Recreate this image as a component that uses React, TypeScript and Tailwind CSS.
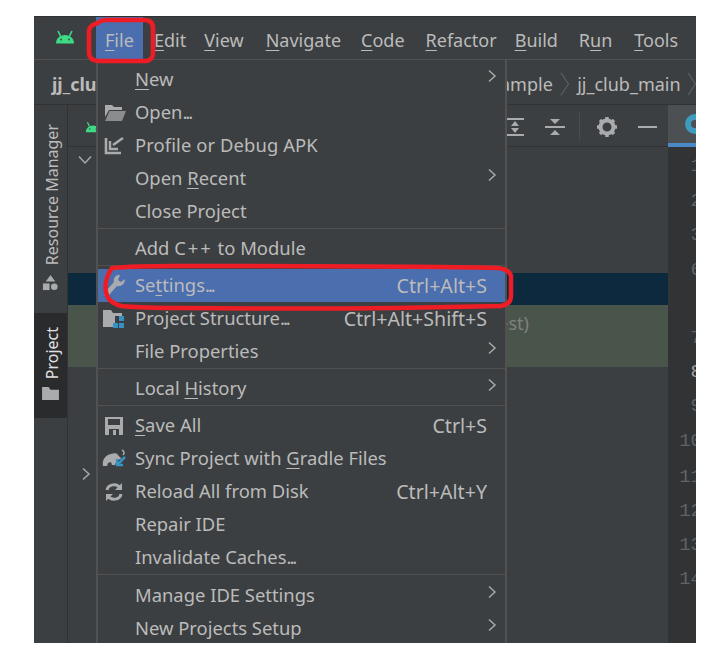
import type { ReactNode } from "react";

const font = { fontFamily: '"Noto Sans", sans-serif' };

function U({ children }: { children: ReactNode }) {
  return <span className="underline decoration-1 underline-offset-[3px]">{children}</span>;
}

function Dots() {
  return <span className="tracking-[-2px]">...</span>;
}

function AndroidIcon({ className }: { className: string }) {
  return (
    <svg viewBox="0 0 20 14" className={className}>
      <path d="M1 13.500c0-5 4-8.500 9-8.500s9 3.500 9 8.500z" fill="#3ddc84" />
      <path d="M5.500 6 3 1M14.500 6 17 1" stroke="#3ddc84" strokeWidth="1.600" />
      <circle cx="6" cy="9.500" r="0.900" fill="#3c3f41" />
      <circle cx="14" cy="9.500" r="0.900" fill="#3c3f41" />
    </svg>
  );
}

function Chevron({ className }: { className: string }) {
  return (
    <svg viewBox="0 0 10 14" className={className} fill="none" stroke="#a8a8a8" strokeWidth="1.500">
      <path d="M2 1.500 8 7l-6 5.500" />
    </svg>
  );
}

function Crumb({ className }: { className: string }) {
  return (
    <svg viewBox="0 0 10 26" className={className} fill="none" stroke="#5e6062" strokeWidth="1.200">
      <path d="M1 1 9 13 1 25" />
    </svg>
  );
}

const g = "#a9abad";

const icons: Record<string, ReactNode> = {
  open: (
    <svg viewBox="0 0 22 18" className="w-[22px] h-[18px]">
      <path d="M1 1h7l2 2h8v3H5L1 13z" fill={g} />
      <path d="M5.500 7H22l-4 10H1z" fill="#8a8c8e" />
    </svg>
  ),
  apk: (
    <svg viewBox="0 0 20 20" className="w-[20px] h-[20px]" fill="none" stroke={g} strokeWidth="2.600">
      <path d="M2 2v15h15" />
      <path d="M19 2 9 9" />
      <path d="M6 5v8h8" strokeWidth="2.400" />
    </svg>
  ),
  wrench: (
    <svg viewBox="0 0 22 24" className="w-[22px] h-[24px]">
      <path d="M14 1c-3 1-5 4-4 7L1 18c-1 2-1 3 0 4s3 1 4-1l8-9c4 1 8-2 8-7l-4 3-3-2 2-5z" fill={g} />
    </svg>
  ),
  structure: (
    <svg viewBox="0 0 24 20" className="w-[24px] h-[20px] -ml-[2px]">
      <path d="M1 1h8l2 3h9v3h-7v11H1z" fill={g} />
      <rect x="17" y="7" width="5" height="5" fill="#3592c4" />
      <rect x="11" y="14" width="5" height="5" fill="#3592c4" />
      <rect x="17" y="14" width="5" height="5" fill="#3592c4" />
    </svg>
  ),
  save: (
    <svg viewBox="0 0 20 20" className="w-[20px] h-[20px]">
      <path d="M1 1h18v18H1z" fill={g} />
      <rect x="4" y="3" width="12" height="6" fill="#3c3f41" />
      <rect x="5" y="13" width="10" height="6" fill="#3c3f41" />
      <rect x="9" y="14" width="3" height="5" fill={g} />
    </svg>
  ),
  gradle: (
    <svg viewBox="0 0 24 20" className="w-[24px] h-[20px] -ml-[2px]">
      <path d="M1 17c-1-6 2-11 8-12 3-1 6-1 7 1s3 2 3 4l-4 1-2 5h-3l-1-3-3 1-1 3z" fill={g} />
      <path d="M20 1c2 1 3 3 1 5" stroke={g} strokeWidth="1.500" fill="none" />
      <path d="M23 8 15 16M15 10v6h6" stroke="#3592c4" strokeWidth="2.500" fill="none" />
    </svg>
  ),
  reload: (
    <svg viewBox="0 0 20 20" className="w-[20px] h-[20px]" fill="none" stroke={g} strokeWidth="3">
      <path d="M3 8c1-6 10-7 13-2" />
      <path d="M17 12c-1 6-10 7-13 2" />
      <path d="M18 1v7h-7z" fill={g} stroke="none" />
      <path d="M2 19v-7h7z" fill={g} stroke="none" />
    </svg>
  ),
};

function Item({
  children,
  icon,
  shortcut,
  more,
  active,
  cls,
}: {
  children: ReactNode;
  icon?: string;
  shortcut?: string;
  more?: boolean;
  active?: boolean;
  cls?: string;
}) {
  return (
    <div className={`flex items-center h-[33px] ${active ? "bg-[#4b6eaf]" : ""} ${cls ?? ""}`}>
      <div className="w-[37px] pl-[6px] flex items-center shrink-0">{icon && icons[icon]}</div>
      <span className="flex-1 whitespace-nowrap text-[18.4px]">{children}</span>
      {shortcut && <span className="pr-[18px] whitespace-nowrap text-[19.6px]">{shortcut}</span>}
      {more && <Chevron className="w-[10px] h-[14px] mr-[8px] -mt-[8px]" />}
    </div>
  );
}

function Sep({ cls }: { cls?: string }) {
  return <div className={`border-t border-[#515151] ${cls ?? "h-[4px]"}`} />;
}

export default function App() {
  const lines = [
    ["1", "h-[35px]"],
    ["2", "h-[34px]"],
    ["3", "h-[35px]"],
    ["6", "h-[68px]"],
    ["7", "h-[34px]"],
    ["8", "h-[34px]"],
    ["9", "h-[35px]"],
    ["10", "h-[36px]"],
    ["11", "h-[34px]"],
    ["12", "h-[34px]"],
    ["13", "h-[34px]"],
    ["14", "h-[34px]"],
  ];

  return (
    <div className="w-[705px] h-[661px] bg-white pt-[16px] pl-[34px] overflow-hidden" style={font}>
      <div className="relative w-[662px] h-[627px] bg-[#3c3f41] text-[#bbbbbb] text-[18px] leading-none flex flex-col overflow-hidden border-t border-[#2f3133]">
        {/* menu bar */}
        <div className="h-[43px] flex items-center border-b border-[#505254] shrink-0">
          <AndroidIcon className="w-[20px] h-[14px] ml-[21px] -mt-[2px]" />
          <div className="ml-[21px] w-[47px] h-full bg-[#4b6eaf] flex items-center pl-[9px] pt-[4px]">
            <span><U>F</U>ile</span>
          </div>
          <div className="flex items-center pt-[4px]">
            <span className="ml-[11px]"><U>E</U>dit</span>
            <span className="ml-[18px]"><U>V</U>iew</span>
            <span className="ml-[22px]"><U>N</U>avigate</span>
            <span className="ml-[20px]"><U>C</U>ode</span>
            <span className="ml-[21px]"><U>R</U>efactor</span>
            <span className="ml-[18px]"><U>B</U>uild</span>
            <span className="ml-[21px]">R<U>u</U>n</span>
            <span className="ml-[22px]"><U>T</U>ools</span>
          </div>
        </div>

        {/* breadcrumb */}
        <div className="h-[45px] flex items-center border-b border-[#323232] shrink-0 pl-[18px] pt-[3px]">
          <span className="font-bold w-[448px] shrink-0 whitespace-nowrap">jj_club</span>
          <span>ample</span>
          <Crumb className="w-[10px] h-[26px] ml-[7px]" />
          <span className="ml-[8px]">jj_club_main</span>
          <Crumb className="w-[10px] h-[26px] ml-[6px]" />
        </div>

        <div className="flex flex-1 min-h-0">
          {/* tool window stripe */}
          <div className="w-[34px] shrink-0 border-r border-[#323232] flex flex-col items-center pt-[19px]">
            <span className="[writing-mode:vertical-rl] rotate-180 text-[16px] whitespace-nowrap ml-[3px]">Resource Manager</span>
            <svg viewBox="0 0 18 18" className="w-[17px] h-[17px] mt-[9px]" fill="#a9abad">
              <path d="M9 1 14 8H4z" />
              <rect x="1" y="10" width="7" height="7" />
              <circle cx="13" cy="13.500" r="3.500" />
            </svg>
            <div className="mt-[22px] w-full h-[105px] bg-[#292b2d] flex flex-col items-center pt-[14px] text-[#e0e0e0]">
              <span className="[writing-mode:vertical-rl] rotate-180 text-[16px] ml-[3px]">Project</span>
              <svg viewBox="0 0 18 16" className="w-[17px] h-[15px] mt-[7px]" fill="#a9abad">
                <path d="M0 1h7l2 3h9v11H0z" />
              </svg>
            </div>
          </div>

          {/* project panel */}
          <div className="flex-1 min-w-0 flex flex-col">
            <div className="h-[42px] flex items-center border-b border-[#323232] shrink-0 pt-[3px]">
              <AndroidIcon className="w-[16px] h-[12px] ml-[17px]" />
              <div className="ml-auto flex items-center mr-[11px]">
                <svg viewBox="0 0 20 20" className="w-[20px] h-[20px]" fill="none" stroke="#a9abad" strokeWidth="2">
                  <path d="M1 2h18M1 18h18" />
                  <path d="M10 5v3M10 15v-3" />
                  <path d="M6 9h8l-4-5zM6 11h8l-4 5z" fill="#a9abad" stroke="none" />
                </svg>
                <svg viewBox="0 0 20 20" className="w-[20px] h-[20px] ml-[20px]" fill="#a9abad">
                  <rect x="0" y="9" width="20" height="2" />
                  <path d="M5 2h10l-5 5zM5 18h10l-5-5z" />
                </svg>
                <div className="w-px h-[28px] bg-[#4a4c4e] ml-[14px]" />
                <svg viewBox="0 0 20 20" className="w-[20px] h-[20px] ml-[17px]">
                  <circle cx="10" cy="10" r="6.500" fill="none" stroke="#a9abad" strokeWidth="4" />
                  <path d="M10 0v4M10 16v4M0 10h4M16 10h4M3 3l3 3M14 14l3 3M17 3l-3 3M6 14l-3 3" stroke="#a9abad" strokeWidth="3.500" />
                </svg>
                <div className="w-[19px] h-[2px] bg-[#a9abad] ml-[21px]" />
              </div>
            </div>
            <div className="flex-1 min-h-0">
              <div className="h-[126px] pl-[10px] pt-[8px]">
                <svg viewBox="0 0 14 10" className="w-[14px] h-[10px]" fill="none" stroke="#a8a8a8" strokeWidth="1.500">
                  <path d="M1 1.500 7 8l6-6.500" />
                </svg>
              </div>
              <div className="h-[32px] bg-[#0d293e]" />
              <div className="h-[62px] bg-[#49544a] flex items-start justify-end pr-[139px] pt-[9px]">
                <span className="text-[#808080]">est)</span>
              </div>
              <div className="pl-[13px] pt-[100px]">
                <Chevron className="w-[10px] h-[14px]" />
              </div>
            </div>
          </div>

          {/* editor gutter */}
          <div className="w-[28px] shrink-0 bg-[#313335] overflow-hidden">
            <div className="h-[42px] bg-[#4c5052] border-b-[4px] border-[#4a88c7] pl-[17px] flex items-center">
              <div className="w-[20px] h-[20px] rounded-full border-[6px] border-[#3d9bc0] shrink-0" />
            </div>
            <div className="w-[34px] pl-[10px] pt-[10px] text-[#606366] text-right whitespace-nowrap text-[19px]" style={{ fontFamily: '"Liberation Mono", monospace' }}>
              {lines.map(([n, h]) => (
                <div key={n} className={`${h} ${n === "8" ? "text-[#a4a3a3]" : ""}`}>
                  {n}
                </div>
              ))}
            </div>
          </div>
        </div>

        {/* File dropdown */}
        <div className="absolute left-[62px] top-[43px] w-[411px] h-[585px] bg-[#3c3f41] border-x-2 border-[#515151] pt-[4px]">
          <Item more cls="-mt-[1px]"><U>N</U>ew</Item>
          <Item icon="open">Open<Dots /></Item>
          <Item icon="apk"><span className="tracking-[0.1px]">Profile or Debug APK</span></Item>
          <Item more>Open <U>R</U>ecent</Item>
          <Item>Close Project</Item>
          <Sep />
          <Item>Add <span className="tracking-[2px]">C++</span> to Module</Item>
          <Sep />
          <Item icon="wrench" shortcut="Ctrl+Alt+S" active>Se<U>t</U>tings<Dots /></Item>
          <Item icon="structure" shortcut="Ctrl+Alt+Shift+S">Project Structure<Dots /></Item>
          <Item more>File Properties</Item>
          <Sep />
          <Item more>Local <U>H</U>istory</Item>
          <Sep />
          <Item icon="save" shortcut="Ctrl+S"><U>S</U>ave All</Item>
          <Item icon="gradle">Sync Project with <U>G</U>radle Files</Item>
          <Item icon="reload" shortcut="Ctrl+Alt+Y">Reload All from Disk</Item>
          <Item>Repair IDE</Item>
          <Item>Invalidate Caches<Dots /></Item>
          <Sep cls="h-[5px]" />
          <Item more>Manage IDE Settings</Item>
          <Item more>New Projects Setup</Item>
        </div>

        {/* red marker annotations */}
        <svg className="absolute left-0 top-0 w-[662px] h-[627px] pointer-events-none" viewBox="0 0 662 627" fill="none" stroke="#ee1c25" strokeWidth="4.500" strokeLinejoin="round">
          <path d="M64 6c2-2 5-3 8-3h38c6 0 9 3 9 8v25c0 5-3 8-8 8H66c-8 0-11-3-11-9V14c0-4 4-7 9-8z" />
          <path d="M78 251c30-3 60-2 90-2 100 0 210 0 296 2 8 1 12 4 13 8v20c0 6-3 9-10 10-80 2-220 3-320 2-30 0-50-1-60-2-7-2-14-6-15-14-1-7 0-16 6-24z" />
        </svg>
      </div>
    </div>
  );
}
